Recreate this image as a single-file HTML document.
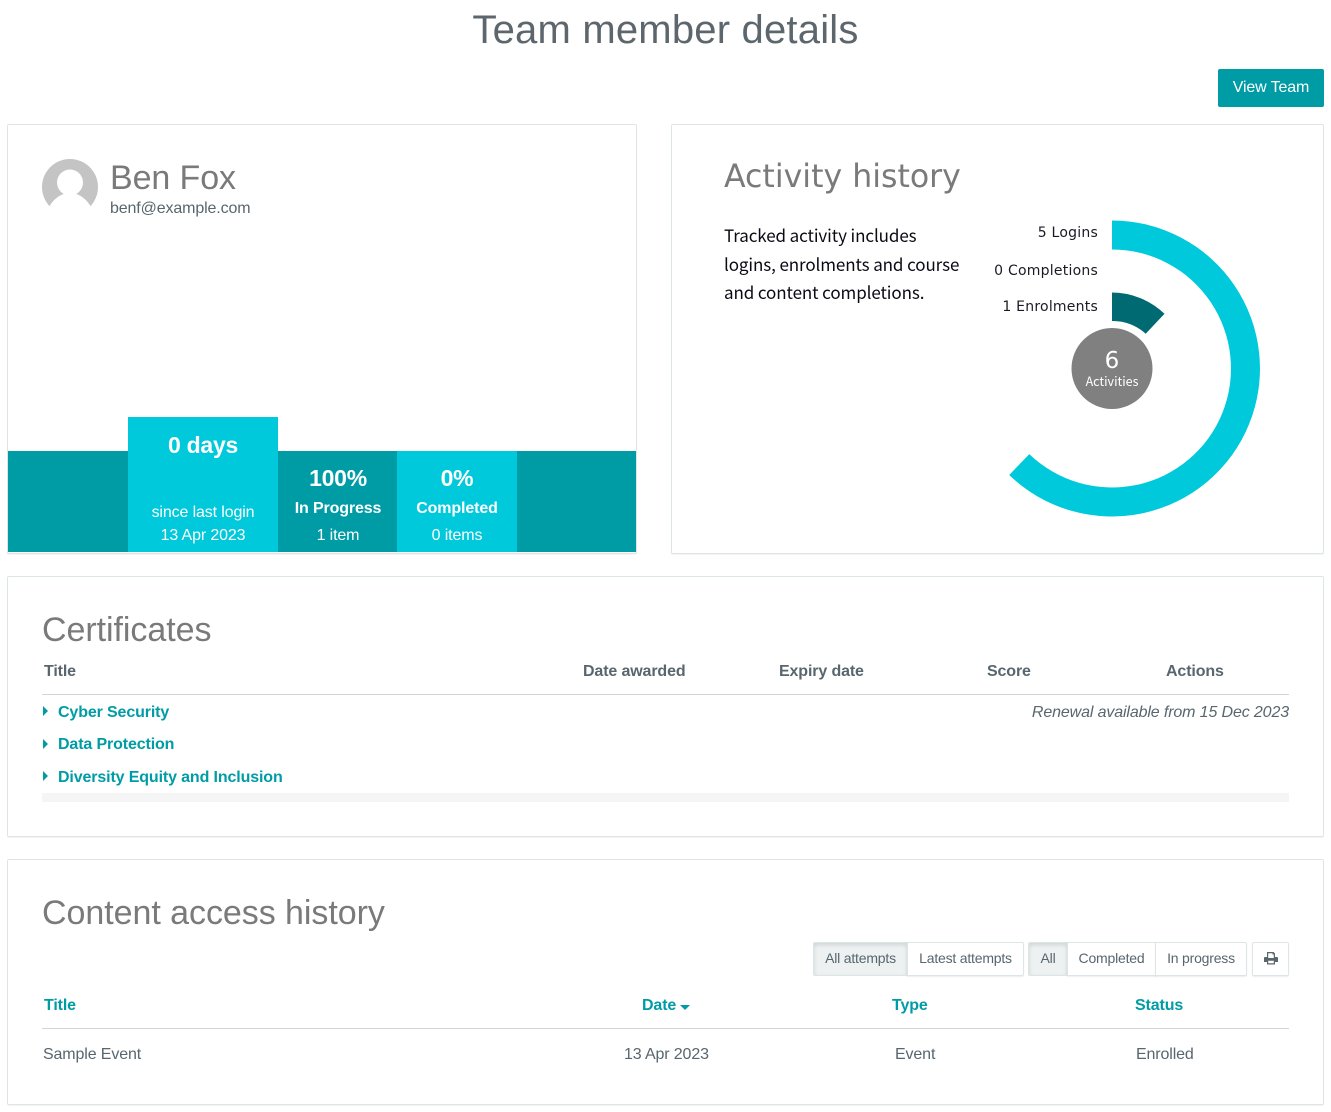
<!DOCTYPE html>
<html lang="en">
<head>
<meta charset="utf-8">
<title>Team member details</title>
<style>
html,body{margin:0;padding:0;background:#fff}
body{width:1331px;height:1112px;position:relative;overflow:hidden;font-family:"Liberation Sans",Arial,sans-serif;color:#58666e;font-size:16px;letter-spacing:-.13px}
.a{position:absolute;white-space:nowrap;line-height:1}
.c{text-align:center}
.card{position:absolute;background:#fff;border:1px solid #dee5e7;border-radius:2px;box-sizing:border-box;box-shadow:0 1px 1px rgba(0,0,0,.05)}
.h{color:#7a7a7a;font-size:34px;letter-spacing:-.05px}
.b{font-weight:bold}
.link{color:#009ca6;font-weight:bold;font-size:16px}
.tri{position:absolute;width:0;height:0;border-left:5px solid #009ca6;border-top:5px solid transparent;border-bottom:5px solid transparent}
.w{color:#fff}
.big{font-size:23px;letter-spacing:-.25px;font-weight:bold;line-height:26px}
.lbl{font-family:'DejaVu Sans',sans-serif;font-size:14px;line-height:16px;color:#1a1a24;letter-spacing:.23px}
.btn{position:absolute;box-sizing:border-box;height:34px;border:1px solid #dee5e7;background:#fff;color:#58666e;font-size:14px;line-height:31px;text-align:center;box-shadow:0 1px 1px rgba(90,90,90,.1);letter-spacing:-.2px}
.on{background:#edf1f2;box-shadow:inset 0 2px 4px rgba(0,0,0,.12)}
</style>
</head>
<body>
<div class="a c" style="left:0;width:1331px;top:8px;font-size:40px;letter-spacing:.2px;line-height:44px;color:#5c666c">Team member details</div>
<div class="a c w" style="left:1218px;top:69px;width:106px;height:38px;line-height:38px;background:#009ca6;border-radius:2px;font-size:16px">View Team</div>

<div class="card" style="left:7px;top:124px;width:630px;height:430px"></div>
<svg style="position:absolute;left:42px;top:159px" width="56" height="56" viewBox="0 0 56 56">
<circle cx="28" cy="28" r="28" fill="#c4c4c4"/>
<circle cx="28" cy="23.5" r="13" fill="#fff"/>
<path d="M7 48C12 39 20 34 28 34C36 34 44 39 49 48C43 53 36 57 28 57C20 57 13 53 7 48Z" fill="#fff"/>
</svg>
<div class="a" style="left:110px;top:159px;font-size:34px;letter-spacing:-.1px;line-height:38px;color:#7a7a7a">Ben Fox</div>
<div class="a" style="left:110px;top:200px;font-size:16px;line-height:18px">benf@example.com</div>

<div style="position:absolute;left:8px;top:451px;width:628px;height:101px;background:#009ca6"></div>
<div style="position:absolute;left:128px;top:417px;width:150px;height:135px;background:#00c9db"></div>
<div style="position:absolute;left:397px;top:451px;width:120px;height:101px;background:#00c9db"></div>
<div class="a c w big" style="left:128px;width:150px;top:432px">0 days</div>
<div class="a c w" style="left:128px;width:150px;top:504px;font-size:16px;line-height:18px">since last login</div>
<div class="a c w" style="left:128px;width:150px;top:527px;font-size:16px;line-height:18px">13 Apr 2023</div>
<div class="a c w big" style="left:278px;width:120px;top:465px">100%</div>
<div class="a c w b" style="left:278px;width:120px;top:500px;font-size:16px;line-height:18px">In Progress</div>
<div class="a c w" style="left:278px;width:120px;top:527px;font-size:16px;line-height:18px">1 item</div>
<div class="a c w big" style="left:397px;width:120px;top:465px">0%</div>
<div class="a c w b" style="left:397px;width:120px;top:500px;font-size:16px;line-height:18px">Completed</div>
<div class="a c w" style="left:397px;width:120px;top:527px;font-size:16px;line-height:18px">0 items</div>

<div class="card" style="left:671px;top:124px;width:653px;height:430px"></div>
<div class="a" style="left:724px;top:158px;font-family:'DejaVu Sans',sans-serif;font-size:31.6px;letter-spacing:0;line-height:38px;color:#7a7a7a">Activity history</div>
<div class="a" style="left:724px;top:221px;font-family:'Noto Sans CJK JP','Liberation Sans',sans-serif;font-size:17px;letter-spacing:-.1px;line-height:28.5px;color:#0a0a14">Tracked activity includes<br>logins, enrolments and course<br>and content completions.</div>
<div class="a lbl" style="right:233px;top:225px">5 Logins</div>
<div class="a lbl" style="right:233px;top:263px">0 Completions</div>
<div class="a lbl" style="right:233px;top:299px">1 Enrolments</div>
<svg style="position:absolute;left:0;top:0" width="1331" height="560" viewBox="0 0 1331 560">
<g transform="translate(0 .5)">
<path d="M1112 220A148 148 0 1 1 1009.2 474.5L1029.3 453.6A119 119 0 1 0 1112 249Z" fill="#00c9db"/>
<path d="M1112 292A76 76 0 0 1 1164.5 313.3L1145.7 333.3A48 48 0 0 0 1112 320.5Z" fill="#006a72"/>
<circle cx="1112" cy="368" r="40.5" fill="#808080"/>
</g>
</svg>
<div class="a c w" style="left:1072px;width:80px;top:347px;font-family:'DejaVu Sans',sans-serif;font-size:23px;letter-spacing:0;line-height:28px">6</div>
<div class="a c w" style="left:1072px;width:80px;top:373px;font-family:'Noto Sans CJK JP','Liberation Sans',sans-serif;font-size:12.5px;letter-spacing:0;line-height:16px">Activities</div>

<div class="card" style="left:7px;top:576px;width:1317px;height:261px"></div>
<div class="a h" style="left:42px;top:611px;line-height:38px">Certificates</div>
<div class="a b" style="left:44px;top:663px;line-height:18px">Title</div>
<div class="a b" style="left:583px;top:663px;line-height:18px">Date awarded</div>
<div class="a b" style="left:779px;top:663px;line-height:18px">Expiry date</div>
<div class="a b" style="left:987px;top:663px;line-height:18px">Score</div>
<div class="a b" style="left:1166px;top:663px;line-height:18px">Actions</div>
<div style="position:absolute;left:42px;top:694px;width:1247px;height:1px;background:#d4d4d4"></div>
<div class="tri" style="left:43px;top:706px"></div>
<div class="a link" style="left:58px;top:704px;line-height:18px">Cyber Security</div>
<div class="a" style="right:42px;top:704px;line-height:18px;font-style:italic">Renewal available from 15 Dec 2023</div>
<div class="tri" style="left:43px;top:739px"></div>
<div class="a link" style="left:58px;top:736px;line-height:18px">Data Protection</div>
<div class="tri" style="left:43px;top:771px"></div>
<div class="a link" style="left:58px;top:769px;line-height:18px">Diversity Equity and Inclusion</div>
<div style="position:absolute;left:42px;top:793px;width:1247px;height:9px;background:#f5f5f5"></div>

<div class="card" style="left:7px;top:859px;width:1317px;height:246px"></div>
<div class="a h" style="left:42px;top:894px;line-height:38px">Content access history</div>
<div class="btn on" style="left:813px;top:942px;width:95px;border-radius:2px 0 0 2px">All attempts</div>
<div class="btn" style="left:907px;top:942px;width:117px;border-radius:0 2px 2px 0">Latest attempts</div>
<div class="btn on" style="left:1028px;top:942px;width:40px;border-radius:2px 0 0 2px">All</div>
<div class="btn" style="left:1067px;top:942px;width:89px">Completed</div>
<div class="btn" style="left:1155px;top:942px;width:92px;border-radius:0 2px 2px 0">In progress</div>
<div class="btn" style="left:1252px;top:942px;width:37px;border-radius:2px"></div>
<svg style="position:absolute;left:1264px;top:952px" width="14" height="13" viewBox="0 0 14 13">
<path fill="#58666e" d="M3 0H9.5L11 1.5V5H13C13.6 5 14 5.4 14 6V10H11V12.5H3V10H0V6C0 5.4.4 5 1 5H3ZM4.2 1.2V6H9.8V2.5H8.5V1.2ZM4.2 8.8V11.3H9.8V8.8Z"/>
</svg>
<div class="a link" style="left:44px;top:997px;line-height:18px">Title</div>
<div class="a link" style="left:642px;top:997px;line-height:18px">Date</div>
<div style="position:absolute;left:680px;top:1005px;width:0;height:0;border-top:5px solid #009ca6;border-left:5px solid transparent;border-right:5px solid transparent"></div>
<div class="a link" style="left:892px;top:997px;line-height:18px">Type</div>
<div class="a link" style="left:1135px;top:997px;line-height:18px">Status</div>
<div style="position:absolute;left:42px;top:1028px;width:1247px;height:1px;background:#d4d4d4"></div>
<div class="a" style="left:43px;top:1046px;line-height:18px">Sample Event</div>
<div class="a" style="left:624px;top:1046px;line-height:18px">13 Apr 2023</div>
<div class="a" style="left:895px;top:1046px;line-height:18px">Event</div>
<div class="a" style="left:1136px;top:1046px;line-height:18px">Enrolled</div>
</body>
</html>
